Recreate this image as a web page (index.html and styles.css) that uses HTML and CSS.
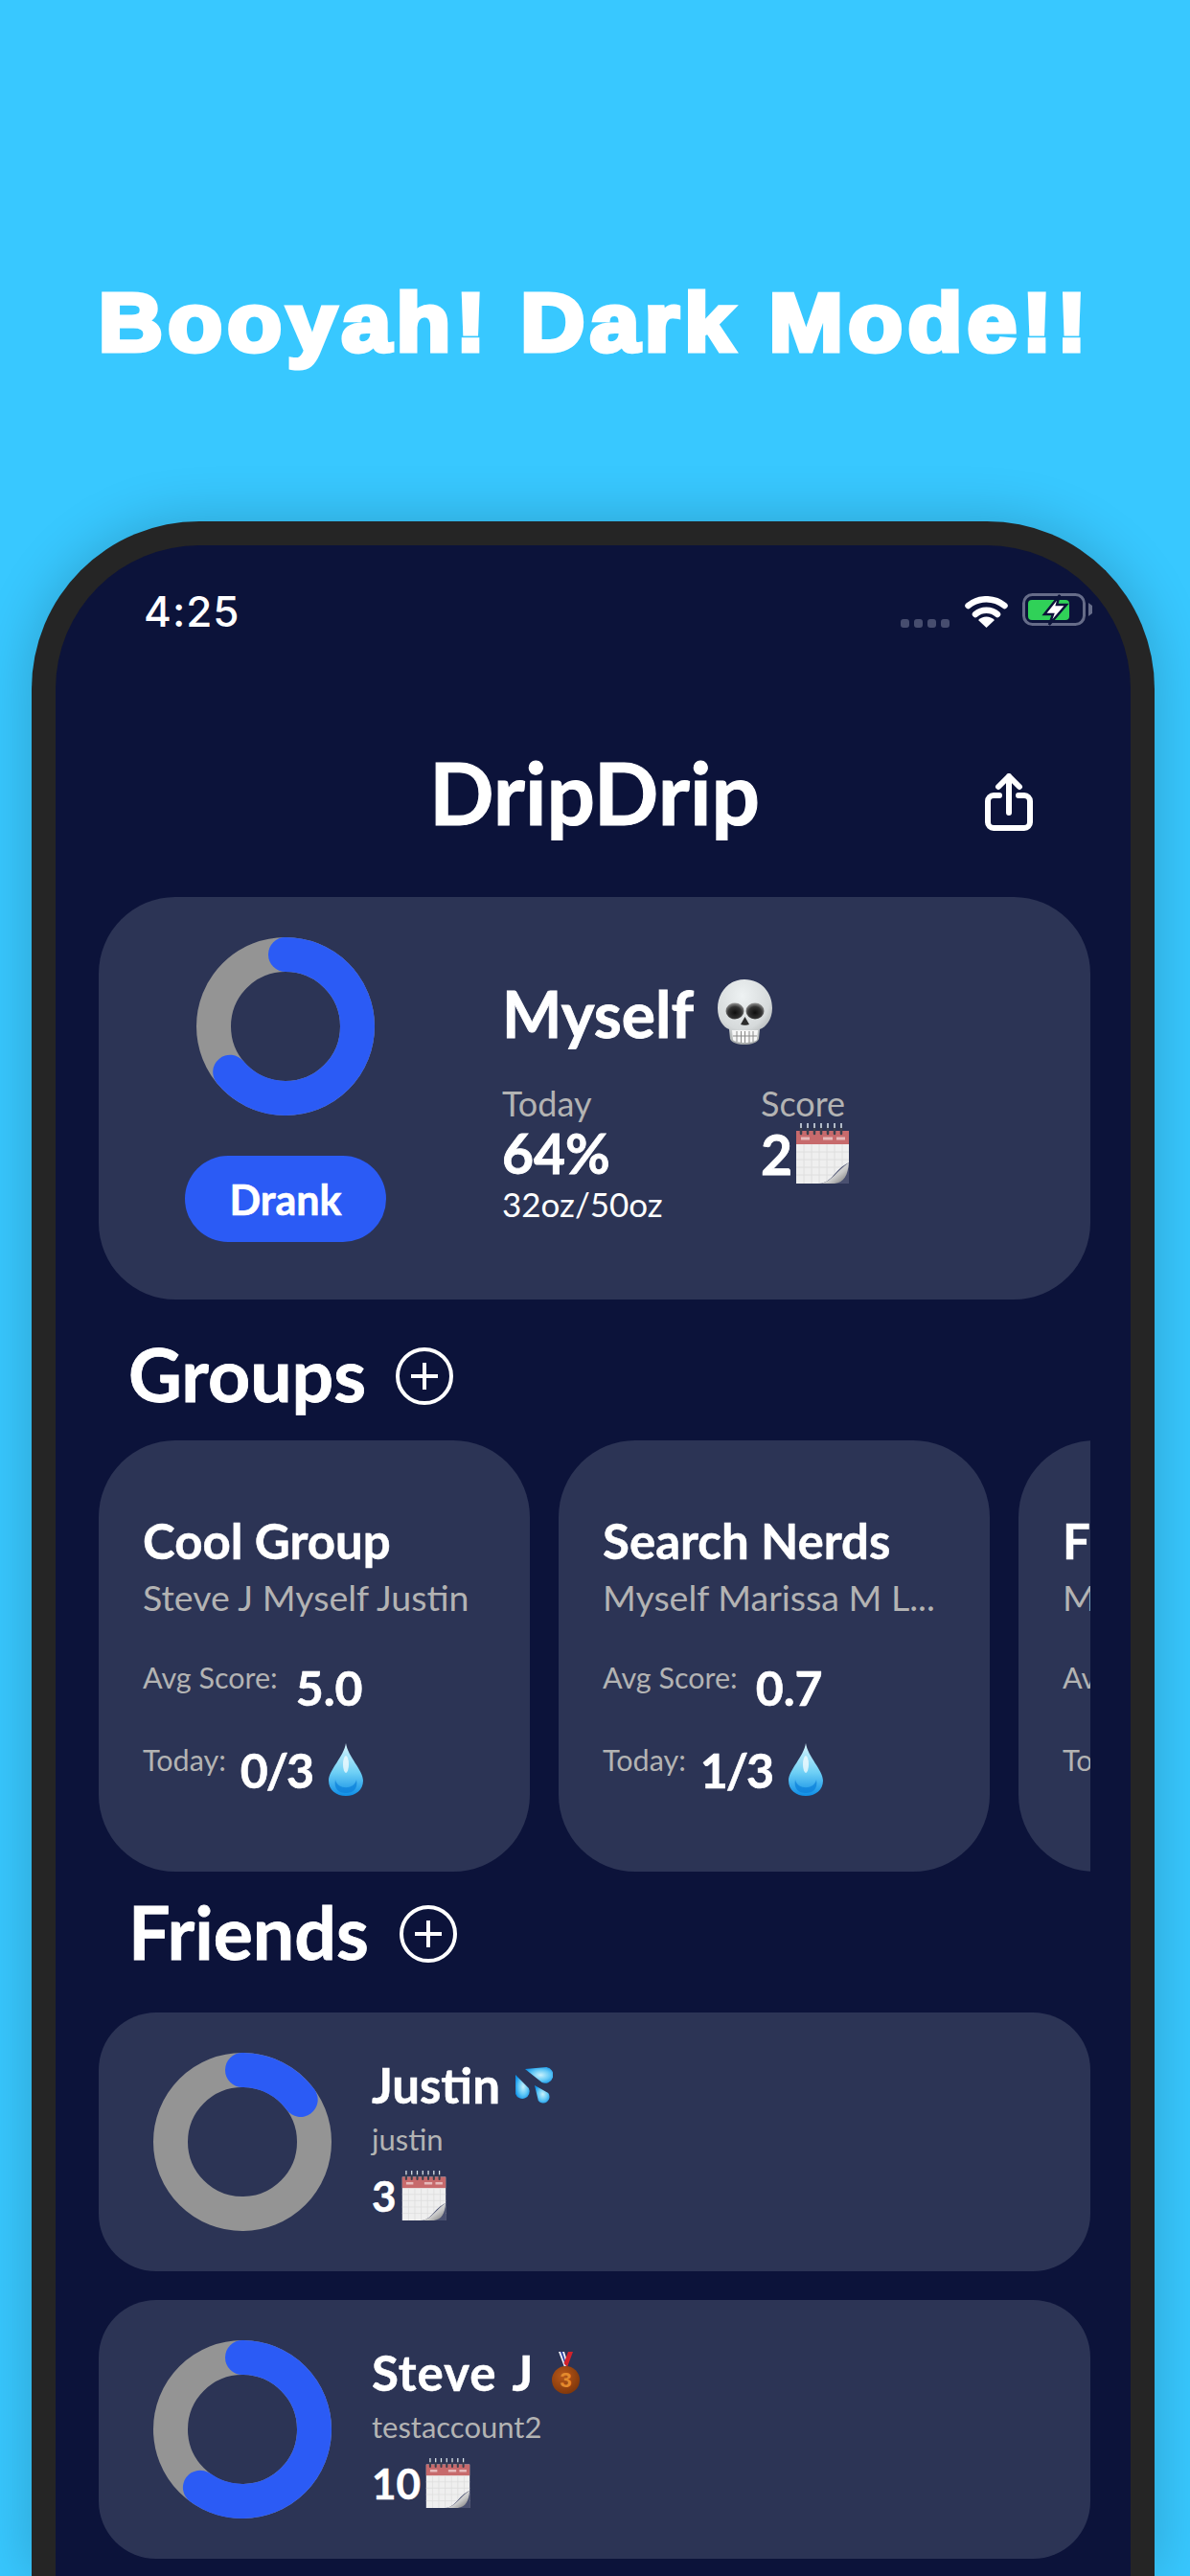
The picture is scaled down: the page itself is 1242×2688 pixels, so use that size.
FILE: index.html
```html
<!DOCTYPE html>
<html lang="en">

<head>
    <meta charset="UTF-8">
    <meta name="viewport" content="width=device-width, initial-scale=1.0">
    <title>DripDrip</title>
    <link rel="stylesheet" href="styles.css">
</head>

<body>
    <!-- emoji drawings, reused below -->
    <svg class="sprites" xmlns="http://www.w3.org/2000/svg">
        <defs>
            <linearGradient id="dropFill" x1="0" y1="0" x2="0" y2="1">
                <stop offset="0" stop-color="#d8f4fc" />
                <stop offset="0.55" stop-color="#6fd0f5" />
                <stop offset="1" stop-color="#0f8ee6" />
            </linearGradient>
            <radialGradient id="sweatFill" cx="0.55" cy="0.5" r="0.6">
                <stop offset="0" stop-color="#c8f1fc" />
                <stop offset="0.55" stop-color="#63c9f6" />
                <stop offset="1" stop-color="#0f93ea" />
            </radialGradient>
            <linearGradient id="curlFill" x1="0" y1="0" x2="1" y2="1">
                <stop offset="0" stop-color="#ffffff" />
                <stop offset="0.6" stop-color="#c9c9c9" />
                <stop offset="1" stop-color="#6d6d6d" />
            </linearGradient>
            <radialGradient id="skullFill" cx="0.45" cy="0.25" r="0.85">
                <stop offset="0" stop-color="#eef2f3" />
                <stop offset="0.6" stop-color="#d6dadb" />
                <stop offset="1" stop-color="#8f9292" />
            </radialGradient>
            <radialGradient id="eyeFill" cx="0.5" cy="0.6" r="0.6">
                <stop offset="0" stop-color="#0e0e0e" />
                <stop offset="0.6" stop-color="#333333" />
                <stop offset="1" stop-color="#9a9a9a" />
            </radialGradient>
            <radialGradient id="bronzeFill" cx="0.4" cy="0.35" r="0.75">
                <stop offset="0" stop-color="#b8591a" />
                <stop offset="1" stop-color="#7a3308" />
            </radialGradient>
        </defs>
        <symbol id="calendar" viewBox="0 0 55 63">
            <rect x="0" y="8" width="55" height="55" fill="#efefef" />
            <rect x="0" y="8" width="55" height="14" fill="#c76a6c" />
            <path d="M0 30H55M0 38H55M0 46H55M0 54H55M8 22V63M16 22V63M24 22V63M32 22V63M40 22V63M48 22V63" stroke="#dedede" stroke-width="1" fill="none" />
            <path d="M5 16h9M28 16h10M42 16h9" stroke="#e6b9ba" stroke-width="3" />
            <path d="M5 2V11M12 2V11M19 2V11M26 2V11M33 2V11M40 2V11M47 2V11" stroke="#3b3f4d" stroke-width="2.500" stroke-linecap="round" />
            <path d="M5 0V5M12 0V5M19 0V5M26 0V5M33 0V5M40 0V5M47 0V5" stroke="#d9e4f0" stroke-width="1.500" />
            <path d="M24 63C38 62 40 48 55 41V63Z" fill="#4a5070" />
            <path d="M26 63C38 60 41 51 55 41C54 54 50 62 40 63Z" fill="url(#curlFill)" />
        </symbol>
        <symbol id="drop" viewBox="0 0 36 55">
            <path d="M18 0C20 14 36 28 36 39C36 49 28 55 18 55C8 55 0 49 0 39C0 28 16 14 18 0Z" fill="url(#dropFill)" />
            <path d="M7 38C9 49 27 49 29 38C31 48 25 52 18 52C11 52 5 48 7 38Z" fill="#0b7fd8" opacity="0.7" />
            <ellipse cx="18" cy="22" rx="3" ry="9" fill="#ffffff" opacity="0.7" />
        </symbol>
    </svg>

    <h1 class="promo">Booyah! Dark Mode!!</h1>

    <div class="phone">
        <div class="status">
            <span class="time">4:25</span>
            <div class="status-icons">
                <div class="signal"><i></i><i></i><i></i><i></i></div>
                <svg class="wifi" viewBox="0 0 45 33">
                    <path d="M3.500 10A30 30 0 0 1 41.500 10M11 19A18 18 0 0 1 34 19" fill="none" stroke="#fff" stroke-width="6.500" stroke-linecap="round" />
                    <path d="M22.500 33L14 25A12 12 0 0 1 31 25Z" fill="#fff" />
                </svg>
                <svg class="battery" viewBox="0 0 73 36">
                    <rect x="1.500" y="1.500" width="63" height="31" rx="9" fill="none" stroke="#666c88" stroke-width="3" />
                    <rect x="6" y="7" width="43" height="21" rx="4" fill="#30d158" />
                    <path d="M69 10L73 13V21L69 24Z" fill="#666c88" />
                    <path d="M39 2L23 22H32L28 33L46 12H36Z" fill="#fff" stroke="#0c133a" stroke-width="2.500" />
                </svg>
            </div>
        </div>

        <div class="top-bar">
            <h2 class="app-name">DripDrip</h2>
            <svg class="share" viewBox="0 0 50 60">
                <path d="M15 23H9A6 6 0 0 0 3 29V51A6 6 0 0 0 9 57H41A6 6 0 0 0 47 51V29A6 6 0 0 0 41 23H35M25 3V41M14 14L25 3L36 14" fill="none" stroke="#fff" stroke-width="6" stroke-linecap="round" stroke-linejoin="round" />
            </svg>
        </div>

        <!-- moje kolko i statystyki -->
        <div class="me-card">
            <div class="me-left">
                <svg class="ring" viewBox="0 0 186 186">
                    <circle class="ring-bg" cx="93" cy="93" r="75" />
                    <circle class="ring-val" cx="93" cy="93" r="75" pathLength="100" stroke-dasharray="64 100" transform="rotate(-90 93 93)" />
                </svg>
                <button class="drank">Drank</button>
            </div>
            <div class="me-right">
                <div class="me-name">
                    <span>Myself</span>
                    <svg class="skull" viewBox="0 0 57 70">
                        <path d="M28 0C46 0 57 14 57 30C57 42 50 50 44 52L43 62C40 70 16 70 13 62L12 52C6 50 0 42 0 30C0 14 11 0 28 0Z" fill="url(#skullFill)" />
                        <ellipse cx="18" cy="33" rx="9.500" ry="8.500" fill="url(#eyeFill)" />
                        <ellipse cx="39" cy="33" rx="9.500" ry="8.500" fill="url(#eyeFill)" />
                        <path d="M28.500 39L33 47C31 48 26 48 24 47Z" fill="#2d2d2d" />
                        <path d="M15 53H42L41 63C38 67 19 67 16 63Z" fill="#f6f6f6" />
                        <path d="M20 54V65M24.500 54V66M28.500 54V66M33 54V66M37 54V65M16 59H41" stroke="#8a8a8a" stroke-width="1" />
                    </svg>
                </div>
                <div class="me-stats">
                    <div class="stat-today">
                        <div class="stat-label">Today</div>
                        <div class="stat-big">64%</div>
                        <div class="stat-oz">32oz/50oz</div>
                    </div>
                    <div class="stat-score">
                        <div class="stat-label">Score</div>
                        <div class="score-line">
                            <span class="stat-big">2</span>
                            <svg class="cal-big"><use href="#calendar" /></svg>
                        </div>
                    </div>
                </div>
            </div>
        </div>

        <div class="section-head section-groups">
            <h3>Groups</h3>
            <svg class="plus" viewBox="0 0 60 60">
                <circle cx="30" cy="30" r="28" />
                <path d="M30 16V44M16 30H44" />
            </svg>
        </div>

        <div class="groups">
            <div class="group-card">
                <div class="group-name">Cool Group</div>
                <div class="group-members">Steve J Myself Justin</div>
                <div class="group-row row-score"><span class="small-label">Avg Score:</span><span class="group-val">5.0</span></div>
                <div class="group-row"><span class="small-label">Today:</span><span class="group-val">0/3</span><svg class="drop"><use href="#drop" /></svg></div>
            </div>
            <div class="group-card">
                <div class="group-name">Search Nerds</div>
                <div class="group-members">Myself Marissa M L...</div>
                <div class="group-row row-score"><span class="small-label">Avg Score:</span><span class="group-val">0.7</span></div>
                <div class="group-row"><span class="small-label">Today:</span><span class="group-val">1/3</span><svg class="drop"><use href="#drop" /></svg></div>
            </div>
            <!-- trzecia karta ucieta, widac tylko poczatek -->
            <div class="group-card">
                <div class="group-name">F</div>
                <div class="group-members">M</div>
                <div class="group-row row-score"><span class="small-label">Av</span></div>
                <div class="group-row"><span class="small-label">To</span></div>
            </div>
        </div>

        <div class="section-head section-friends">
            <h3>Friends</h3>
            <svg class="plus" viewBox="0 0 60 60">
                <circle cx="30" cy="30" r="28" />
                <path d="M30 16V44M16 30H44" />
            </svg>
        </div>

        <div class="friend-card">
            <svg class="ring" viewBox="0 0 186 186">
                <circle class="ring-bg" cx="93" cy="93" r="75" />
                <circle class="ring-val" cx="93" cy="93" r="75" pathLength="100" stroke-dasharray="15 100" transform="rotate(-90 93 93)" />
            </svg>
            <div class="friend-info">
                <div class="friend-name">
                    <span>Justin</span>
                    <svg class="sweat" viewBox="0 0 41 40">
                        <path d="M12 3L34.400 0.900A8.500 8.500 0 1 1 29.600 17.100Z" fill="url(#sweatFill)" />
                        <path d="M2 9L15.900 23.100A7.500 7.500 0 1 1 2.100 28.900Z" fill="url(#sweatFill)" />
                        <path d="M22 20L36.200 28.100A6.500 6.500 0 1 1 25.800 35.900Z" fill="url(#sweatFill)" />
                    </svg>
                </div>
                <div class="friend-user">justin</div>
                <div class="friend-score">
                    <span>3</span>
                    <svg class="cal-small"><use href="#calendar" /></svg>
                </div>
            </div>
        </div>

        <div class="friend-card">
            <svg class="ring" viewBox="0 0 186 186">
                <circle class="ring-bg" cx="93" cy="93" r="75" />
                <circle class="ring-val" cx="93" cy="93" r="75" pathLength="100" stroke-dasharray="60 100" transform="rotate(-90 93 93)" />
            </svg>
            <div class="friend-info">
                <div class="friend-name">
                    <span class="steve">Steve J</span>
                    <svg class="medal" viewBox="0 0 29 44">
                        <path d="M7 0H13L17 13L13 16Z" fill="#f0f0f6" />
                        <path d="M9 0H11L15.500 14H14Z" fill="#2a3f9e" />
                        <path d="M17 0H22L16 16L12.500 12Z" fill="#d3222a" />
                        <circle cx="14.500" cy="29.500" r="14.500" fill="url(#bronzeFill)" />
                        <text class="medal-num" x="14.500" y="37">3</text>
                    </svg>
                </div>
                <div class="friend-user">testaccount2</div>
                <div class="friend-score">
                    <span>10</span>
                    <svg class="cal-small"><use href="#calendar" /></svg>
                </div>
            </div>
        </div>
    </div>
</body>

</html>
```
FILE: styles.css
```css
/* Cala strona */
body {
    margin: 0;
    width: 1242px;
    height: 2688px;
    overflow: hidden;
    background-color: #38c8ff;
    font-family: "Lato", "Open Sans", sans-serif;
    color: #fff;
}

.sprites {
    display: block;
    width: 0;
    height: 0;
    overflow: hidden;
}

.promo {
    margin: 0;
    height: 544px;
    padding-top: 285px;
    box-sizing: border-box;
    text-align: center;
    font-family: "Liberation Sans", Arial, sans-serif;
    font-size: 86px;
    line-height: 102px;
    font-weight: 700;
    letter-spacing: 5px;
    white-space: nowrap;
    -webkit-text-stroke: 5px #fff;
    transform: scaleX(1.08);
}

/* Telefon */
.phone {
    width: 1172px;
    height: 2144px;
    margin-left: 33px;
    padding: 0 42px 0 45px;
    box-sizing: border-box;
    border: 25px solid #252525;
    border-bottom: none;
    border-radius: 175px 175px 0 0;
    background-color: #0c133a;
    box-shadow: 0 0 60px rgba(0, 0, 0, 0.2);
    overflow: hidden;
}

.status {
    height: 86px;
    display: flex;
    align-items: flex-end;
    justify-content: space-between;
    margin: 0 -2px 0 47px;
}

.time {
    font-family: "Inter", "Liberation Sans", sans-serif;
    font-size: 44px;
    line-height: 34px;
    font-weight: 500;
    letter-spacing: 1px;
}

.status-icons {
    display: flex;
    align-items: flex-end;
}

.signal {
    display: flex;
    gap: 5px;
    margin-right: 16px;
}

.signal i {
    width: 9px;
    height: 9px;
    border-radius: 3px;
    background-color: #474d6e;
}

.wifi {
    width: 45px;
    height: 33px;
    margin-right: 15px;
}

.battery {
    width: 73px;
    height: 36px;
}

.top-bar {
    position: relative;
    height: 159px;
    margin-top: 122px;
    display: flex;
    justify-content: center;
}

.app-name {
    margin: 0;
    font-size: 89px;
    line-height: 100px;
    font-weight: 700;
    -webkit-text-stroke: 1px #fff;
}

.share {
    position: absolute;
    right: 60px;
    top: 30px;
    width: 50px;
    height: 60px;
}

/* Karta uzytkownika */
.me-card {
    height: 420px;
    display: flex;
    border-radius: 80px;
    background-color: #2c3455;
}

.me-left {
    width: 300px;
    flex-shrink: 0;
    padding-top: 42px;
    box-sizing: border-box;
    display: flex;
    flex-direction: column;
    align-items: center;
    margin-left: 45px;
}

.ring {
    width: 186px;
    height: 186px;
    flex-shrink: 0;
}

.ring-bg {
    fill: none;
    stroke: #949494;
    stroke-width: 36;
}

.ring-val {
    fill: none;
    stroke: #2b5bf5;
    stroke-width: 36;
    stroke-linecap: round;
}

.drank {
    width: 210px;
    height: 90px;
    margin-top: 42px;
    border: none;
    border-radius: 45px;
    background-color: #2b5bf5;
    color: #fff;
    font-family: inherit;
    font-size: 43px;
    font-weight: 700;
    -webkit-text-stroke: 0.6px #fff;
}

.me-right {
    margin-left: 76px;
    padding-top: 88px;
}

.me-name {
    display: flex;
    align-items: center;
    height: 66px;
    font-size: 66px;
    font-weight: 700;
    gap: 25px;
    -webkit-text-stroke: 0.8px #fff;
}

.skull {
    width: 57px;
    height: 70px;
}

.me-stats {
    display: flex;
    margin-top: 40px;
}

.stat-today {
    width: 270px;
}

.stat-label {
    font-size: 36px;
    line-height: 42px;
    color: #b3b3b3;
}

.stat-big {
    font-size: 57px;
    line-height: 62px;
    font-weight: 700;
    -webkit-text-stroke: 0.8px #fff;
}

.stat-oz {
    font-size: 35px;
    line-height: 44px;
}

.score-line {
    display: flex;
    align-items: center;
    gap: 4px;
}

.cal-big {
    width: 55px;
    height: 63px;
}

/* Naglowki sekcji */
.section-head {
    display: flex;
    align-items: center;
    height: 60px;
    margin-left: 31px;
}

.section-head h3 {
    margin: 0 0 5px;
    font-size: 77px;
    line-height: 55px;
    font-weight: 700;
    -webkit-text-stroke: 0.8px #fff;
}

.section-groups {
    margin-top: 50px;
    gap: 31px;
}

.section-friends {
    margin-top: 35px;
    gap: 32px;
}

.plus {
    width: 60px;
    height: 60px;
    fill: none;
    stroke: #fff;
    stroke-width: 4;
}

/* Grupy */
.groups {
    display: flex;
    gap: 30px;
    margin-top: 37px;
    overflow: hidden;
}

.group-card {
    flex: 0 0 450px;
    height: 450px;
    padding: 75px 0 0 46px;
    box-sizing: border-box;
    border-radius: 80px;
    background-color: #2c3455;
}

.group-name {
    font-size: 51px;
    line-height: 60px;
    font-weight: 700;
    -webkit-text-stroke: 0.5px #fff;
}

.group-members {
    margin-top: 6px;
    font-size: 37.500px;
    line-height: 46px;
    color: #b3b3b3;
    white-space: nowrap;
}

.group-row {
    display: flex;
    align-items: flex-start;
    height: 56px;
    margin-top: 30px;
}

.row-score {
    margin-top: 43px;
}

.small-label {
    font-size: 30.500px;
    line-height: 34px;
    color: #b3b3b3;
    margin-right: 15px;
}

.row-score .small-label {
    margin-right: 19px;
}

.group-val {
    font-size: 50px;
    line-height: 56px;
    font-weight: 700;
    letter-spacing: -2px;
    margin-right: 17px;
    -webkit-text-stroke: 0.6px #fff;
}

.row-score .group-val {
    letter-spacing: 0;
}

.drop {
    width: 36px;
    height: 55px;
}

/* Znajomi */
.friend-card {
    height: 270px;
    margin-bottom: 30px;
    display: flex;
    align-items: center;
    padding-left: 57px;
    border-radius: 60px;
    background-color: #2c3455;
}

.section-friends + .friend-card {
    margin-top: 52px;
}

.friend-info {
    margin-left: 42px;
}

.friend-name {
    display: flex;
    align-items: center;
    height: 44px;
    font-size: 51px;
    font-weight: 700;
    gap: 14px;
    -webkit-text-stroke: 0.5px #fff;
}

.steve {
    letter-spacing: 1px;
    word-spacing: 4px;
}

.sweat {
    width: 41px;
    height: 40px;
}

.medal {
    width: 29px;
    height: 44px;
    margin-left: 5px;
}

.medal-num {
    font-family: "Liberation Sans", sans-serif;
    font-size: 22px;
    font-weight: 700;
    fill: #e58a2c;
    stroke: none;
    text-anchor: middle;
}

.friend-user {
    font-size: 31px;
    line-height: 38px;
    margin-top: 15px;
    color: #b3b3b3;
}

.friend-score {
    display: flex;
    align-items: center;
    gap: 5px;
    margin-top: 14px;
    font-size: 44px;
    font-weight: 700;
    -webkit-text-stroke: 0.5px #fff;
}

.cal-small {
    width: 47px;
    height: 52px;
}
```
